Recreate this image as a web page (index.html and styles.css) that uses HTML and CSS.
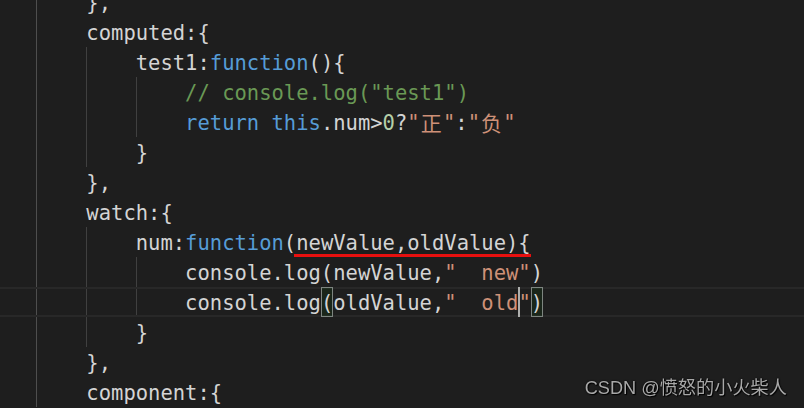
FILE: index.html
```html
<!DOCTYPE html>
<html lang="zh">
<head>
<meta charset="utf-8">
<title>code</title>
<link rel="stylesheet" href="styles.css">
</head>
<body>
<div class="editor">
<div class="line">    },</div>
<div class="line">    computed:{</div>
<div class="line g2">        test1:<span class="kw">function</span>(){</div>
<div class="line g3">            <span class="cm">// console.log("test1")</span></div>
<div class="line g3">            <span class="kw">return</span> <span class="kw">this</span>.num&gt;<span class="nu">0</span>?<span class="st">"<span class="wide">正</span>"</span>:<span class="st">"<span class="wide">负</span>"</span></div>
<div class="line g2">        }</div>
<div class="line">    },</div>
<div class="line">    watch:{</div>
<div class="line g2">        num:<span class="kw">function</span>(<span class="mark">newValue,oldValue){</span></div>
<div class="line g3">            console.log(newValue,<span class="st">"  new"</span>)</div>
<div class="line g3 current">            console.log<span class="bm">(</span>oldValue,<span class="st">"  old<span class="cursor"></span>"</span><span class="bm">)</span></div>
<div class="line g2">        }</div>
<div class="line">    },</div>
<div class="line">    component:{</div>
</div>
<div class="watermark">CSDN @愤怒的小火柴人</div>
</body>
</html>
```

FILE: styles.css
```css
html, body {
  margin: 0;
  padding: 0;
  background: #1e1e1e;
  overflow: hidden;
  height: 100%;
}

.editor {
  margin-top: -13px;
  font-family: "DejaVu Sans Mono", "Noto Sans CJK SC", monospace;
  font-size: 20.5px;
  color: #d4d4d4;
}

.line {
  height: 30px;
  line-height: 32px;
  padding-left: 37px;
  white-space: pre;
  overflow: hidden;
  background:
    linear-gradient(#4e4e4e, #4e4e4e) no-repeat 36px 0 / 1px 100%;
}

.line.g2 {
  background:
    linear-gradient(#404040, #404040) no-repeat 86px 0 / 1px 100%,
    linear-gradient(#4e4e4e, #4e4e4e) no-repeat 36px 0 / 1px 100%;
}

.line.g3 {
  background:
    linear-gradient(#404040, #404040) no-repeat 136px 0 / 1px 100%,
    linear-gradient(#404040, #404040) no-repeat 86px 0 / 1px 100%,
    linear-gradient(#4e4e4e, #4e4e4e) no-repeat 36px 0 / 1px 100%;
}

.line.current {
  box-shadow: inset 0 2px 0 #282828, inset 0 -2px 0 #282828;
}

.kw { color: #569cd6; }
.cm { color: #6a9955; }
.st { color: #ce9178; }
.nu { color: #b5cea8; }

.wide {
  display: inline-block;
  width: 2ch;
  text-align: center;
  font-family: "Noto Sans CJK SC", sans-serif;
  font-size: 21px;
  line-height: 30px;
  vertical-align: top;
  height: 30px;
}

.mark {
  position: relative;
}

.mark::after {
  content: "";
  position: absolute;
  left: -2px;
  right: 0;
  bottom: -2px;
  height: 3px;
  background: #e8100f;
}

.bm {
  display: inline-block;
  height: 30px;
  vertical-align: top;
  line-height: 32px;
  box-shadow: inset 0 0 0 1px #7d8580;
  background: rgba(0, 100, 0, 0.12);
}

.cursor {
  display: inline-block;
  width: 2px;
  margin-right: -2px;
  height: 30px;
  vertical-align: top;
  background: #aeafad;
}

.watermark {
  position: fixed;
  right: 17px;
  bottom: 10px;
  font-family: "Liberation Sans", "Noto Sans CJK SC", sans-serif;
  font-size: 18.2px;
  line-height: 20px;
  color: #a8a8a8;
  text-shadow: 0 0 2px #000, 1px 1px 1px #000;
}
```
